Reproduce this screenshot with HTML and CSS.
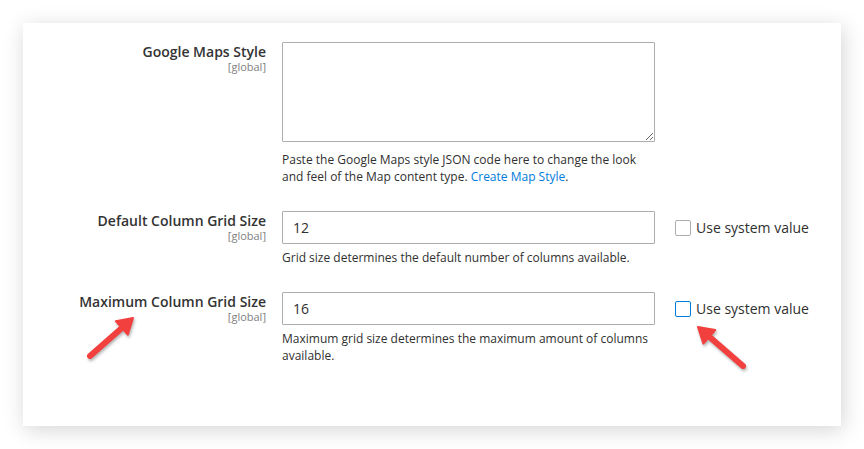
FILE: index.html
```html
<!DOCTYPE html>
<html lang="en">
<head>
  <meta charset="UTF-8">
  <title>Page Builder Settings</title>
  <link rel="stylesheet" href="styles.css">
</head>
<body>
  <div class="card">
    <div class="row">
      <div class="label">
        <span class="label-text">Google Maps Style</span>
        <span class="scope">[global]</span>
      </div>
      <div class="control">
        <textarea class="textarea"></textarea>
        <div class="note">Paste the Google Maps style JSON code here to change the look and feel of the Map content type. <a href="#">Create Map Style</a>.</div>
      </div>
      <div class="extra"></div>
    </div>

    <div class="row">
      <div class="label">
        <span class="label-text">Default Column Grid Size</span>
        <span class="scope">[global]</span>
      </div>
      <div class="control">
        <input type="text" class="input" value="12">
        <div class="note">Grid size determines the default number of columns available.</div>
      </div>
      <label class="extra check">
        <span class="box"></span>
        <span>Use system value</span>
      </label>
    </div>

    <div class="row">
      <div class="label">
        <span class="label-text">Maximum Column Grid Size</span>
        <span class="scope">[global]</span>
      </div>
      <div class="control">
        <input type="text" class="input" value="16">
        <div class="note">Maximum grid size determines the maximum amount of columns available.</div>
      </div>
      <label class="extra check">
        <span class="box focused"></span>
        <span>Use system value</span>
      </label>
    </div>
  </div>

  <svg class="arrows" width="864" height="449" viewBox="0 0 864 449">
    <g class="arrow">
      <line x1="90" y1="356" x2="121.8" y2="327.9"/>
      <polygon points="133,318 127.8,334.6 115.8,321.2"/>
    </g>
    <g class="arrow">
      <line x1="743" y1="366" x2="709.3" y2="336.8"/>
      <polygon points="698,327 715.2,330 703.4,343.6"/>
    </g>
  </svg>
</body>
</html>
```

FILE: styles.css
```css
body {
  margin: 0;
  padding: 23px;
  background: #fff;
  font-family: 'Open Sans', 'Liberation Sans', sans-serif;
  color: #303030;
  position: relative;
}

.card {
  width: 818px;
  height: 403px;
  box-sizing: border-box;
  padding-top: 19px;
  background: #fff;
  box-shadow: 2px 4px 20px rgba(0, 0, 0, 0.17);
}

.row {
  display: grid;
  grid-template-columns: 243px 373px 1fr;
  column-gap: 16px;
  margin-bottom: 26px;
}

.label {
  display: flex;
  flex-direction: column;
  align-items: flex-end;
  text-align: right;
  padding-top: 2px;
}

.label-text {
  font-size: 14px;
  font-weight: 600;
  line-height: 16px;
  color: #333;
}

.scope {
  font-size: 11px;
  line-height: 14px;
  color: #808080;
}

.control {
  display: flex;
  flex-direction: column;
}

.textarea {
  width: 373px;
  height: 100px;
  box-sizing: border-box;
  border: 1px solid #adadad;
  border-radius: 1px;
  margin: 0 0 4px;
  font-family: inherit;
}

.input {
  width: 373px;
  height: 33px;
  box-sizing: border-box;
  border: 1px solid #adadad;
  border-radius: 1px;
  margin: 0;
  padding: 0 10px;
  font-family: inherit;
  font-size: 14px;
  color: #303030;
}

.note {
  margin-top: 5px;
  font-size: 12px;
  line-height: 17px;
  color: #303030;
}

.note a {
  color: #007bdb;
  text-decoration: none;
}

.extra {
  margin-left: 4px;
}

.check {
  display: flex;
  align-items: center;
  gap: 5px;
  height: 33px;
  font-size: 14px;
  color: #303030;
}

.box {
  width: 16px;
  height: 16px;
  box-sizing: border-box;
  border: 1px solid #adadad;
  border-radius: 2px;
  background: #fff;
  margin-top: 1px;
}

.box.focused {
  border-color: #007bdb;
}

.arrows {
  position: absolute;
  top: 0;
  left: 0;
  pointer-events: none;
}

.arrow {
  filter: drop-shadow(1px 2px 1.5px rgba(0, 0, 0, 0.3));
}

.arrow line {
  stroke: #f2403f;
  stroke-width: 6;
  stroke-linecap: round;
}

.arrow polygon {
  fill: #f2403f;
  stroke: #f2403f;
  stroke-width: 2;
  stroke-linejoin: round;
}
```
